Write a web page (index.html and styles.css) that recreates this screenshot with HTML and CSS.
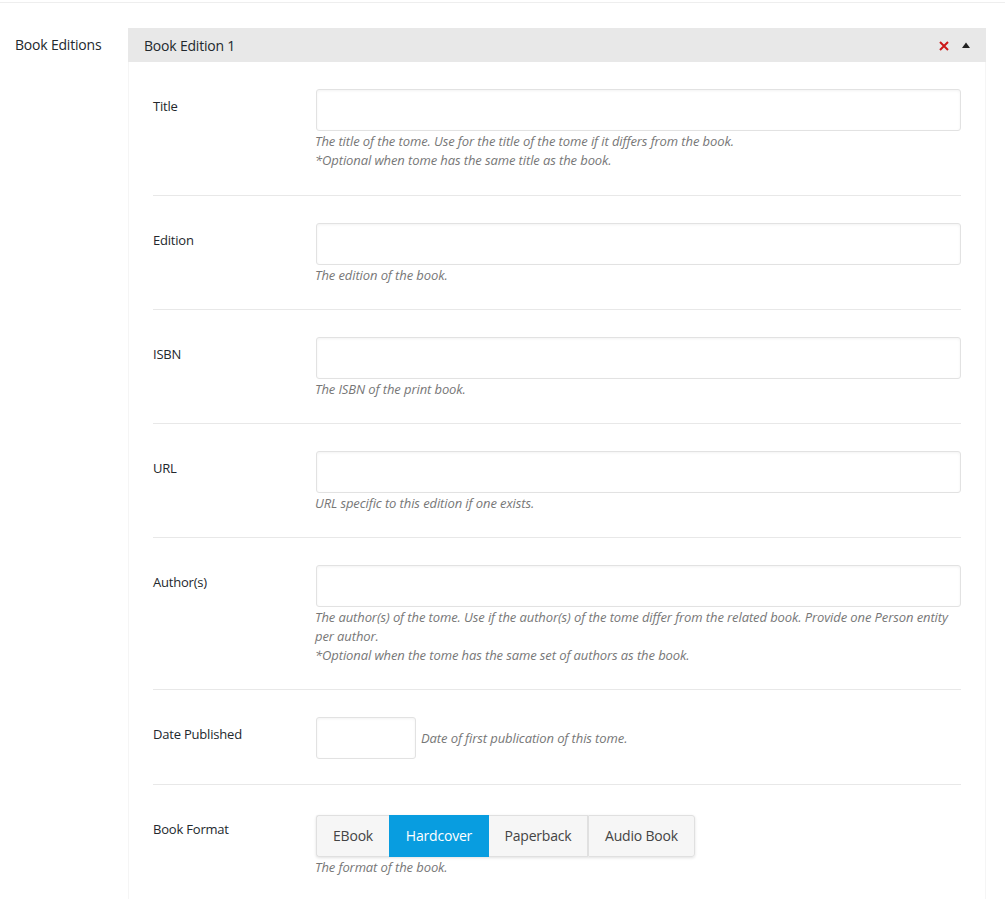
FILE: index.html
```html
<!DOCTYPE html>
<html>
<head>
<meta charset="utf-8">
<link rel="stylesheet" href="styles.css">
</head>
<body>
<div class="page">
  <div class="field">
    <div class="field-label">Book Editions</div>
    <div class="group">
      <div class="group-head">
        <span class="group-title">Book Edition 1</span>
        <span class="group-actions">
          <svg class="ico-x" width="12" height="12" viewBox="0 0 12 12"><path d="M2 2 L10 10 M10 2 L2 10" stroke="#cc1818" stroke-width="2" fill="none"/></svg>
          <svg class="ico-up" width="10" height="8" viewBox="0 0 10 8"><path d="M1 7 L5 1.5 L9 7 Z" fill="#222"/></svg>
        </span>
      </div>
      <div class="group-body">
        <div class="row first">
          <div class="row-label">Title</div>
          <div class="row-ctrl">
            <div class="input"></div>
            <p class="help">The title of the tome. Use for the title of the tome if it differs from the book.<br>*Optional when tome has the same title as the book.</p>
          </div>
        </div>
        <div class="row">
          <div class="row-label">Edition</div>
          <div class="row-ctrl">
            <div class="input"></div>
            <p class="help">The edition of the book.</p>
          </div>
        </div>
        <div class="row">
          <div class="row-label">ISBN</div>
          <div class="row-ctrl">
            <div class="input"></div>
            <p class="help">The ISBN of the print book.</p>
          </div>
        </div>
        <div class="row">
          <div class="row-label">URL</div>
          <div class="row-ctrl">
            <div class="input"></div>
            <p class="help">URL specific to this edition if one exists.</p>
          </div>
        </div>
        <div class="row">
          <div class="row-label">Author(s)</div>
          <div class="row-ctrl">
            <div class="input"></div>
            <p class="help">The author(s) of the tome. Use if the author(s) of the tome differ from the related book. Provide one Person entity per author.<br>*Optional when the tome has the same set of authors as the book.</p>
          </div>
        </div>
        <div class="row date">
          <div class="row-label">Date Published</div>
          <div class="row-ctrl inline">
            <div class="input small"></div>
            <p class="help inline-help">Date of first publication of this tome.</p>
          </div>
        </div>
        <div class="row last">
          <div class="row-label">Book Format</div>
          <div class="row-ctrl">
            <div class="btn-group">
              <span class="btn b1">EBook</span><span class="btn b2 active">Hardcover</span><span class="btn b3">Paperback</span><span class="btn b4">Audio Book</span>
            </div>
            <p class="help">The format of the book.</p>
          </div>
        </div>
      </div>
    </div>
  </div>
</div>
</body>
</html>
```

FILE: styles.css
```css
html, body {
  margin: 0;
  padding: 0;
  background: #fff;
}
body {
  font-family: "Open Sans", "Noto Sans", sans-serif;
  color: #23282d;
}
.page {
  margin-top: 2px;
  border-top: 1px solid #eeeeee;
  padding-top: 25px;
}
.field {
  display: flex;
  align-items: flex-start;
}
.field-label {
  width: 113px;
  padding-left: 15px;
  font-size: 14px;
  line-height: 34px;
  letter-spacing: -0.2px;
}
.group {
  width: 856px;
  border-left: 1px solid #f5f5f5;
  border-right: 1px solid #f5f5f5;
}
.group-head {
  height: 34px;
  background: #e8e8e8;
  display: flex;
  align-items: center;
  justify-content: space-between;
  padding: 0 15px 0 16px;
  margin: 0 -1px;
}
.group-title {
  font-size: 14px;
  letter-spacing: -0.2px;
}
.group-actions {
  display: flex;
  align-items: center;
  gap: 11px;
}
.ico-x { display: block; margin-top: 1px; }
.ico-up { display: block; }
.group-body {
  padding: 0 24px 0 24px;
}
.row {
  display: grid;
  grid-template-columns: 163px 1fr;
  padding: 27px 0 24px;
  border-bottom: 1px solid #e8e8e8;
}
.row.first {
  padding-bottom: 25px;
}
.row.date {
  padding-bottom: 25px;
}
.row.last {
  border-bottom: none;
  padding-bottom: 40px;
}
.row-label {
  font-size: 13px;
  line-height: 18px;
  padding-top: 8px;
  letter-spacing: -0.2px;
}
.row-ctrl {
  min-width: 0;
}
.input {
  height: 40px;
  border: 1px solid #e2e2e2;
  border-radius: 3px;
  box-shadow: inset 0 1px 3px rgba(0,0,0,0.05);
  background: #fff;
}
.input.small {
  width: 98px;
  flex: none;
}
.help {
  margin: 1px 0 0 -1px;
  font-size: 13px;
  line-height: 19px;
  font-style: italic;
  color: #777;
  letter-spacing: -0.1px;
}
.inline {
  display: flex;
  align-items: center;
}
.inline-help {
  margin: 0 0 0 5px;
}
.btn-group {
  display: inline-flex;
  margin-top: 3px;
  border-radius: 3px;
  box-shadow: 0 1px 3px rgba(0,0,0,0.12);
}
.btn {
  display: inline-block;
  height: 40px;
  line-height: 40px;
  font-size: 14px;
  color: #444;
  background: #f6f6f6;
  border: 1px solid #e0e0e0;
  box-sizing: content-box;
  text-align: center;
  letter-spacing: -0.2px;
}
.b1 { width: 72px; border-radius: 3px 0 0 3px; border-right: none; }
.b2 { width: 100px; }
.b3 { width: 98px; border-left: none; }
.b4 { width: 105px; border-left: 1px solid #e0e0e0; border-radius: 0 3px 3px 0; }
.btn.active {
  background: #089de0;
  color: #fff;
  height: 42px;
  line-height: 42px;
  border: none;
}
```
